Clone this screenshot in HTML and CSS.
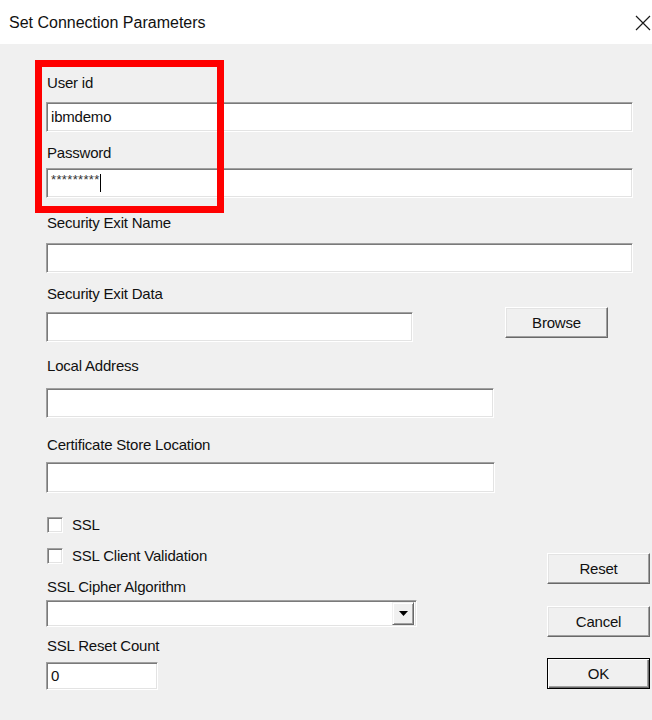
FILE: index.html
```html
<!DOCTYPE html>
<html>
<head>
<meta charset="utf-8">
<title>Set Connection Parameters</title>
<link rel="stylesheet" href="styles.css">
</head>
<body>
<div class="dialog">
  <div class="titlebar">
    <span class="title">Set Connection Parameters</span>
    <svg class="close" width="16" height="16" viewBox="0 0 16 16" aria-hidden="true">
      <path d="M1 1 L15 15 M15 1 L1 15" stroke="#1a1a1a" stroke-width="1.2" fill="none"/>
    </svg>
  </div>
  <div class="content">
    <div class="lbl l1">User id</div>
    <div class="field full f1"><span class="val">ibmdemo</span></div>
    <div class="lbl l2">Password</div>
    <div class="field full f2"><span class="stars">*********</span><span class="caret"></span></div>
    <div class="lbl l3">Security Exit Name</div>
    <div class="field full f3"></div>
    <div class="lbl l4">Security Exit Data</div>
    <div class="browse-row">
      <div class="field f4"></div>
      <div class="btn browse">Browse</div>
    </div>
    <div class="lbl l5">Local Address</div>
    <div class="field f5"></div>
    <div class="lbl l6">Certificate Store Location</div>
    <div class="field f6"></div>
    <div class="bottom">
      <div class="left">
        <div class="check c1"><span class="box"></span><span>SSL</span></div>
        <div class="check c2"><span class="box"></span><span>SSL Client Validation</span></div>
        <div class="lbl l7">SSL Cipher Algorithm</div>
        <div class="field combo">
          <span class="drop">
            <svg width="9" height="5" viewBox="0 0 9 5" aria-hidden="true"><path d="M0 0 H9 L4.5 5 Z" fill="#000"/></svg>
          </span>
        </div>
        <div class="lbl l8">SSL Reset Count</div>
        <div class="field f8"><span class="val">0</span></div>
      </div>
      <div class="right">
        <div class="btn reset">Reset</div>
        <div class="btn cancel">Cancel</div>
        <div class="btn ok">OK</div>
      </div>
    </div>
  </div>
  <div class="highlight"></div>
</div>
</body>
</html>
```
FILE: styles.css
```css
html, body {
  margin: 0;
  padding: 0;
  background: #f0f0f0;
}
body {
  font-family: "Liberation Sans", Arial, sans-serif;
  font-size: 15px;
  letter-spacing: -0.2px;
  color: #111;
}
.dialog {
  position: relative;
  width: 652px;
  height: 720px;
  overflow: hidden;
}
.titlebar {
  height: 44px;
  background: #fff;
  display: flex;
  align-items: center;
  justify-content: space-between;
  padding: 0 1px 0 9px;
  box-sizing: border-box;
}
.title {
  font-size: 16px;
  letter-spacing: 0;
  line-height: 18px;
  margin-top: 1px;
}
.close {
  margin-top: 1px;
}
.content {
  padding-left: 46px;
  display: flex;
  flex-direction: column;
  align-items: flex-start;
}
.lbl {
  line-height: 16px;
  height: 16px;
  padding-left: 1px;
  white-space: nowrap;
}
.field {
  box-sizing: border-box;
  height: 30px;
  background: #fff;
  border: 1px solid;
  border-color: #a0a0a0 #ffffff #ffffff #a0a0a0;
  box-shadow: inset 1px 1px 0 #7a7a7a, inset -1px -1px 0 #e3e3e3;
  display: flex;
  align-items: center;
  padding-left: 4px;
  line-height: 16px;
}
.full { width: 587px; }
.l1 { margin-top: 31px; }
.f1 { margin-top: 11px; }
.l2 { margin-top: 13px; }
.f2 { margin-top: 7px; }
.l3 { margin-top: 17px; }
.f3 { margin-top: 12px; }
.l4 { margin-top: 13px; }
.browse-row {
  margin-top: 5px;
  display: flex;
  align-items: flex-start;
}
.f4 { width: 367px; margin-top: 5px; }
.browse {
  margin-left: 92px;
  width: 106px;
  height: 32px;
}
.l5 { margin-top: 16px; }
.f5 { margin-top: 14px; width: 448px; }
.l6 { margin-top: 19px; }
.f6 { margin-top: 9px; width: 449px; height: 31px; }

.stars {
  font-size: 13px;
  letter-spacing: 0.35px;
  line-height: 12px;
  margin-top: -7px;
  color: #333;
}
.caret {
  display: inline-block;
  width: 1px;
  height: 18px;
  background: #000;
  margin-left: 0;
}

.bottom {
  display: flex;
  align-items: flex-start;
}
.left {
  width: 371px;
  display: flex;
  flex-direction: column;
  align-items: flex-start;
}
.check {
  display: flex;
  align-items: center;
  height: 17px;
  line-height: 16px;
  padding-left: 1px;
}
.box {
  box-sizing: border-box;
  width: 16px;
  height: 16px;
  background: #fff;
  border: 1px solid;
  border-color: #a0a0a0 #ffffff #ffffff #a0a0a0;
  box-shadow: inset 1px 1px 0 #7a7a7a, inset -1px -1px 0 #e3e3e3;
  margin-right: 9px;
}
.c1 { margin-top: 23px; }
.c2 { margin-top: 14px; }
.l7 { margin-top: 15px; }
.combo {
  margin-top: 5px;
  width: 371px;
  height: 27px;
  justify-content: flex-end;
  padding: 2px 2px 2px 4px;
}
.drop {
  box-sizing: border-box;
  width: 22px;
  height: 23px;
  background: #f0f0f0;
  border: 1px solid;
  border-color: #f0f0f0 #696969 #696969 #f0f0f0;
  box-shadow: inset 1px 1px 0 #fff, inset -1px -1px 0 #a0a0a0;
  display: flex;
  align-items: center;
  justify-content: center;
}
.l8 { margin-top: 11px; }
.f8 { margin-top: 8px; width: 112px; height: 28px; }

.right {
  margin-left: 130px;
  display: flex;
  flex-direction: column;
}
.btn {
  box-sizing: border-box;
  width: 103px;
  height: 31px;
  background: #f0f0f0;
  border: 1px solid;
  border-color: #ffffff #696969 #696969 #ffffff;
  box-shadow: inset -1px -1px 0 #a0a0a0, inset 1px 1px 0 #e3e3e3;
  display: flex;
  align-items: center;
  justify-content: center;
  line-height: 16px;
}
.reset { margin-top: 60px; }
.cancel { margin-top: 22px; }
.ok {
  margin-top: 21px;
  border-color: #000;
  box-shadow: inset 1px 1px 0 #fff, inset -1px -1px 0 #696969, inset -2px -2px 0 #a0a0a0;
}

.highlight {
  position: absolute;
  left: 35px;
  top: 60px;
  width: 189px;
  height: 153px;
  box-sizing: border-box;
  border: 7px solid #ff0000;
  pointer-events: none;
}
```
